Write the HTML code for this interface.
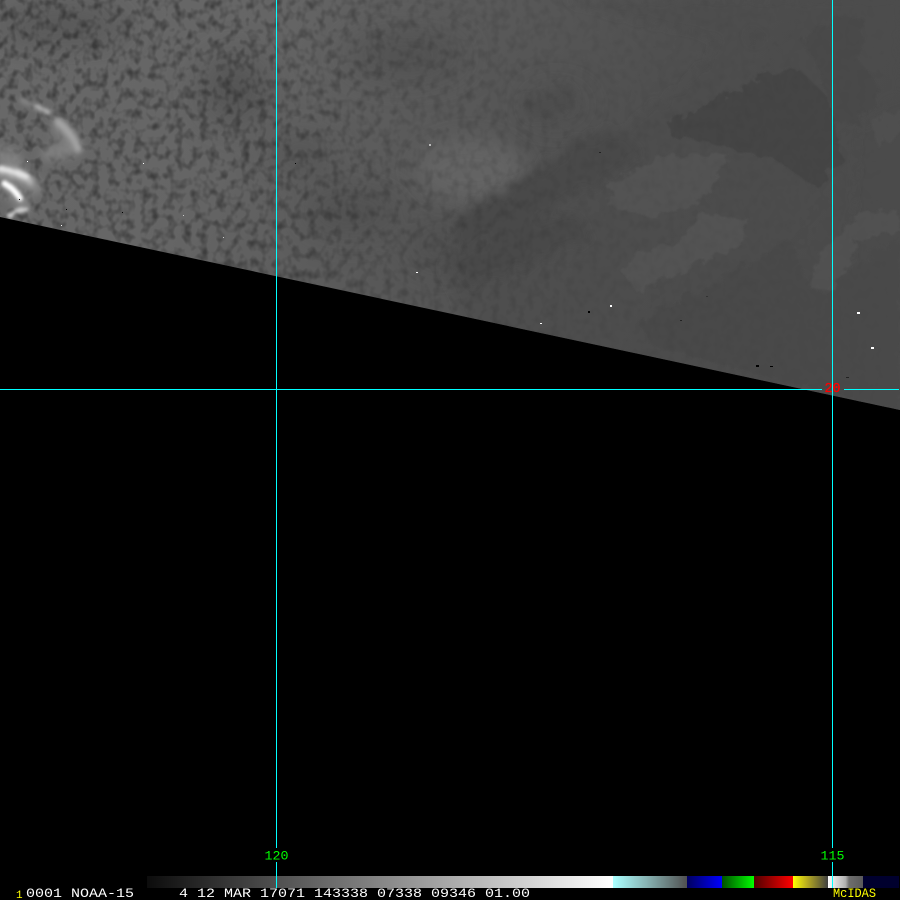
<!DOCTYPE html>
<html lang="en">
<head>
<meta charset="utf-8">
<title>McIDAS NOAA-15</title>
<style>
html,body{margin:0;padding:0;background:#000;width:900px;height:900px;overflow:hidden}
svg{display:block}
text{font-family:"Liberation Mono",monospace}
</style>
</head>
<body>
<svg xmlns="http://www.w3.org/2000/svg" width="900" height="900" viewBox="0 0 900 900">
<defs>
<clipPath id="earth"><polygon points="0,0 900,0 900,410 0,217"/></clipPath>
<linearGradient id="base" x1="0" y1="0" x2="1" y2="0.22">
<stop offset="0" stop-color="#696969"/>
<stop offset=".3" stop-color="#656565"/>
<stop offset=".5" stop-color="#5a5a5a"/>
<stop offset=".75" stop-color="#4f4f4f"/>
<stop offset="1" stop-color="#4b4b4b"/>
</linearGradient>
<linearGradient id="fade" x1="0" x2="1" y1="0" y2="0">
<stop offset="0" stop-color="#fff"/>
<stop offset=".28" stop-color="#ddd"/>
<stop offset=".45" stop-color="#666"/>
<stop offset=".65" stop-color="#222"/>
<stop offset="1" stop-color="#000"/>
</linearGradient>
<mask id="fadeMask"><rect width="900" height="420" fill="url(#fade)"/></mask>
<filter id="b20" x="-60%" y="-60%" width="220%" height="220%"><feGaussianBlur stdDeviation="18"/></filter>
<filter id="b10" x="-40%" y="-40%" width="180%" height="180%"><feGaussianBlur stdDeviation="10"/></filter>
<filter id="b5" x="-40%" y="-40%" width="180%" height="180%"><feGaussianBlur stdDeviation="5"/></filter>
<filter id="cloudSoft" x="-40%" y="-40%" width="180%" height="180%">
<feTurbulence type="fractalNoise" baseFrequency=".12" numOctaves="2" seed="3" result="n"/>
<feDisplacementMap in="SourceGraphic" in2="n" scale="9" result="d"/>
<feGaussianBlur in="d" stdDeviation="2.5"/>
</filter>
<filter id="cloudCore" x="-40%" y="-40%" width="180%" height="180%">
<feTurbulence type="fractalNoise" baseFrequency=".15" numOctaves="2" seed="8" result="n"/>
<feDisplacementMap in="SourceGraphic" in2="n" scale="6" result="d"/>
<feGaussianBlur in="d" stdDeviation="1.5"/>
</filter>
<filter id="rough" x="-10%" y="-10%" width="120%" height="120%">
<feTurbulence type="fractalNoise" baseFrequency=".09" numOctaves="3" seed="5" result="n"/>
<feDisplacementMap in="SourceGraphic" in2="n" scale="14" result="d"/>
<feGaussianBlur in="d" stdDeviation=".7"/>
</filter>
<filter id="roughSoft" x="-20%" y="-20%" width="140%" height="140%">
<feTurbulence type="fractalNoise" baseFrequency=".09" numOctaves="3" seed="5" result="n"/>
<feDisplacementMap in="SourceGraphic" in2="n" scale="18" result="d"/>
<feGaussianBlur in="d" stdDeviation="4"/>
</filter>
<filter id="mottle" x="0" y="0" width="100%" height="100%">
<feTurbulence type="fractalNoise" baseFrequency=".12 .10" numOctaves="2" seed="11"/>
<feColorMatrix type="matrix" values="0 0 0 0 0  0 0 0 0 0  0 0 0 0 0  2.4 0 0 0 -1.05"/>
</filter>
</defs>

<rect width="900" height="900" fill="#000"/>

<g clip-path="url(#earth)">
<rect width="900" height="420" fill="url(#base)"/>

<!-- broad dark patches, left/centre -->
<g filter="url(#b20)" fill="#484848" opacity=".7">
<ellipse cx="60" cy="25" rx="70" ry="16"/>
<ellipse cx="235" cy="90" rx="32" ry="32"/>
<ellipse cx="405" cy="55" rx="60" ry="20"/>
<ellipse cx="300" cy="155" rx="32" ry="16"/>
<ellipse cx="350" cy="212" rx="50" ry="20"/>
<ellipse cx="440" cy="245" rx="28" ry="20"/>
<ellipse cx="555" cy="105" rx="30" ry="12"/>
</g>
<g filter="url(#b10)" fill="#646464">
<ellipse cx="470" cy="170" rx="55" ry="32"/>
</g>

<!-- soft regions, centre-right -->
<g filter="url(#roughSoft)">
<polygon fill="#4c4c4c" points="560,0 900,0 900,90 860,130 850,250 880,410 700,410 590,360 470,330 440,270 470,235 540,190 620,130 680,90 720,40" opacity=".55"/>
<polygon fill="#494949" points="575,140 620,130 640,150 600,185 570,195 540,220 500,235 460,250 450,225 500,190 540,170"/>
<polygon fill="#4a4a4a" points="450,260 520,225 580,215 590,240 540,260 470,290"/>
<polygon fill="#4e4e4e" points="520,100 570,85 575,110 530,120"/>
<polygon fill="#4c4c4c" points="745,35 760,30 765,45 750,45"/>
</g>

<!-- stepped regions, right -->
<g filter="url(#rough)">
<polygon fill="#454545" points="667,123 717,100 767,73 800,70 830,100 836,133 843,160 817,187 775,160 720,145 670,135"/>
<polygon fill="#484848" points="800,40 840,15 865,20 860,60 880,90 860,125 835,120 815,60"/>
<polygon fill="#484848" points="755,260 790,240 810,287 830,300 845,270 900,240 900,410 800,385 650,345 640,320 680,300"/>
<polygon fill="#525252" points="610,187 657,157 727,153 710,193 683,207 650,217 610,207"/>
<polygon fill="#535353" points="683,233 703,213 750,220 737,247 697,263 637,293 623,273 637,253 680,243"/>
<polygon fill="#515151" points="850,227 867,210 900,213 900,230 857,240 833,293 810,287 820,250"/>
<polygon fill="#4f4f4f" points="870,120 900,110 900,130 880,150"/>
</g>

<!-- mottled texture -->
<g mask="url(#fadeMask)"><rect width="900" height="420" filter="url(#mottle)" opacity=".42"/></g>

<!-- clouds -->
<g filter="url(#b5)" fill="none" stroke-linecap="round">
<path d="M58,128 C66,132 74,140 74,148 C66,152 58,150 48,154" stroke="#848484" stroke-width="13"/>
<path d="M0,155 C8,152 14,158 16,164" stroke="#888" stroke-width="12"/>
<path d="M0,172 C12,172 26,178 36,188" stroke="#8e8e8e" stroke-width="12"/>
<path d="M4,186 C12,190 20,198 24,206" stroke="#8e8e8e" stroke-width="12"/>
</g>
<g filter="url(#cloudSoft)" fill="none" stroke-linecap="round">
<path d="M58,122 C66,128 74,138 78,148" stroke="#a4a4a4" stroke-width="8"/>
<path d="M22,100 C30,105 38,108 50,112" stroke="#8c8c8c" stroke-width="4"/>
<path d="M0,170 C12,171 22,174 30,180" stroke="#bcbcbc" stroke-width="8"/>
</g>
<g filter="url(#cloudCore)" fill="none" stroke-linecap="round">
<path d="M38,107 L48,112" stroke="#b0b0b0" stroke-width="4"/>
<path d="M0,169 C10,170 20,173 27,177" stroke="#e4e4e4" stroke-width="4.500"/>
<path d="M5,184 C10,186 16,192 20,198" stroke="#ffffff" stroke-width="6"/>
<path d="M8,215 L26,209" stroke="#d0d0d0" stroke-width="4"/>
</g>

<!-- specks -->
<g fill="#fff" shape-rendering="crispEdges">
<rect x="143" y="163" width="1" height="1"/>
<rect x="27" y="161" width="1" height="1"/>
<rect x="61" y="225" width="1" height="1"/>
<rect x="183" y="215" width="1" height="1" fill="#ccc"/>
<rect x="223" y="237" width="1" height="1" fill="#ccc"/>
<rect x="429" y="144" width="2" height="2" fill="#bbb"/>
<rect x="416" y="272" width="2" height="1"/>
<rect x="540" y="323" width="2" height="1"/>
<rect x="610" y="305" width="2" height="2"/>
<rect x="857" y="312" width="3" height="2"/>
<rect x="871" y="347" width="3" height="2"/>
</g>
<g fill="#000" shape-rendering="crispEdges">
<rect x="19" y="199" width="1" height="1"/>
<rect x="66" y="209" width="1" height="1"/>
<rect x="122" y="212" width="1" height="1"/>
<rect x="295" y="163" width="1" height="1"/>
<rect x="599" y="152" width="2" height="1" fill="#222"/>
<rect x="588" y="311" width="2" height="2"/>
<rect x="680" y="320" width="2" height="1" fill="#222"/>
<rect x="706" y="296" width="2" height="1" fill="#333"/>
<rect x="756" y="365" width="3" height="2"/>
<rect x="770" y="366" width="3" height="1"/>
<rect x="846" y="377" width="3" height="1" fill="#222"/>
</g>
</g>

<!-- colour bar -->
<g shape-rendering="crispEdges">
<defs>
<linearGradient id="cGray" x1="0" x2="1" y1="0" y2="0"><stop offset="0" stop-color="#0c0c0c"/><stop offset="1" stop-color="#fff"/></linearGradient>
<linearGradient id="cCyan" x1="0" x2="1" y1="0" y2="0"><stop offset="0" stop-color="#aaffff"/><stop offset=".45" stop-color="#88b4b4"/><stop offset="1" stop-color="#505050"/></linearGradient>
<linearGradient id="cBlue" x1="0" x2="1" y1="0" y2="0"><stop offset="0" stop-color="#000060"/><stop offset="1" stop-color="#0000ff"/></linearGradient>
<linearGradient id="cGreen" x1="0" x2="1" y1="0" y2="0"><stop offset="0" stop-color="#005000"/><stop offset="1" stop-color="#00ff00"/></linearGradient>
<linearGradient id="cRed" x1="0" x2="1" y1="0" y2="0"><stop offset="0" stop-color="#500000"/><stop offset="1" stop-color="#ff0000"/></linearGradient>
<linearGradient id="cYel" x1="0" x2="1" y1="0" y2="0"><stop offset="0" stop-color="#ffff00"/><stop offset=".4" stop-color="#b8ac20"/><stop offset="1" stop-color="#404040"/></linearGradient>
<linearGradient id="cWhite" x1="0" x2="1" y1="0" y2="0"><stop offset="0" stop-color="#ffffff"/><stop offset=".5" stop-color="#b0b0b0"/><stop offset=".6" stop-color="#6e6e6e"/><stop offset="1" stop-color="#5a5a5a"/></linearGradient>
</defs>
<rect x="147" y="876" width="466" height="12" fill="url(#cGray)"/>
<rect x="613" y="876" width="74" height="12" fill="url(#cCyan)"/>
<rect x="687" y="876" width="35" height="12" fill="url(#cBlue)"/>
<rect x="722" y="876" width="32" height="12" fill="url(#cGreen)"/>
<rect x="754" y="876" width="39" height="12" fill="url(#cRed)"/>
<rect x="793" y="876" width="35" height="12" fill="url(#cYel)"/>
<rect x="828" y="876" width="35" height="12" fill="url(#cWhite)"/>
<rect x="863" y="876" width="36" height="12" fill="#00002e"/>
</g>

<!-- grid lines -->
<g fill="#00ffff" shape-rendering="crispEdges">
<rect x="276" y="0" width="1" height="848"/>
<rect x="276" y="862" width="1" height="26"/>
<rect x="832" y="0" width="1" height="848"/>
<rect x="832" y="862" width="1" height="26"/>
<rect x="0" y="389" width="822" height="1"/>
<rect x="844" y="389" width="55" height="1"/>
</g>

<!-- labels -->
<text x="824.500" y="392" font-size="14" fill="#ff0000" stroke="#ff0000" stroke-width=".35" textLength="16" lengthAdjust="spacingAndGlyphs">20</text>
<rect x="264" y="849" width="25" height="13" fill="#000"/>
<rect x="820" y="849" width="25" height="13" fill="#000"/>
<text x="264.500" y="859.500" font-size="13" fill="#00ff00" textLength="24" lengthAdjust="spacingAndGlyphs">120</text>
<text x="820.500" y="859.500" font-size="13" fill="#00ff00" textLength="24" lengthAdjust="spacingAndGlyphs">115</text>
<text x="16" y="898" font-size="11" fill="#ffff00">1</text>
<text x="26" y="897" font-size="13" fill="#ffffff" xml:space="preserve" textLength="504" lengthAdjust="spacingAndGlyphs">0001 NOAA-15     4 12 MAR 17071 143338 07338 09346 01.00</text>
<text x="833" y="897" font-size="13" fill="#ffff00" textLength="43" lengthAdjust="spacingAndGlyphs">McIDAS</text>
</svg>
</body>
</html>
